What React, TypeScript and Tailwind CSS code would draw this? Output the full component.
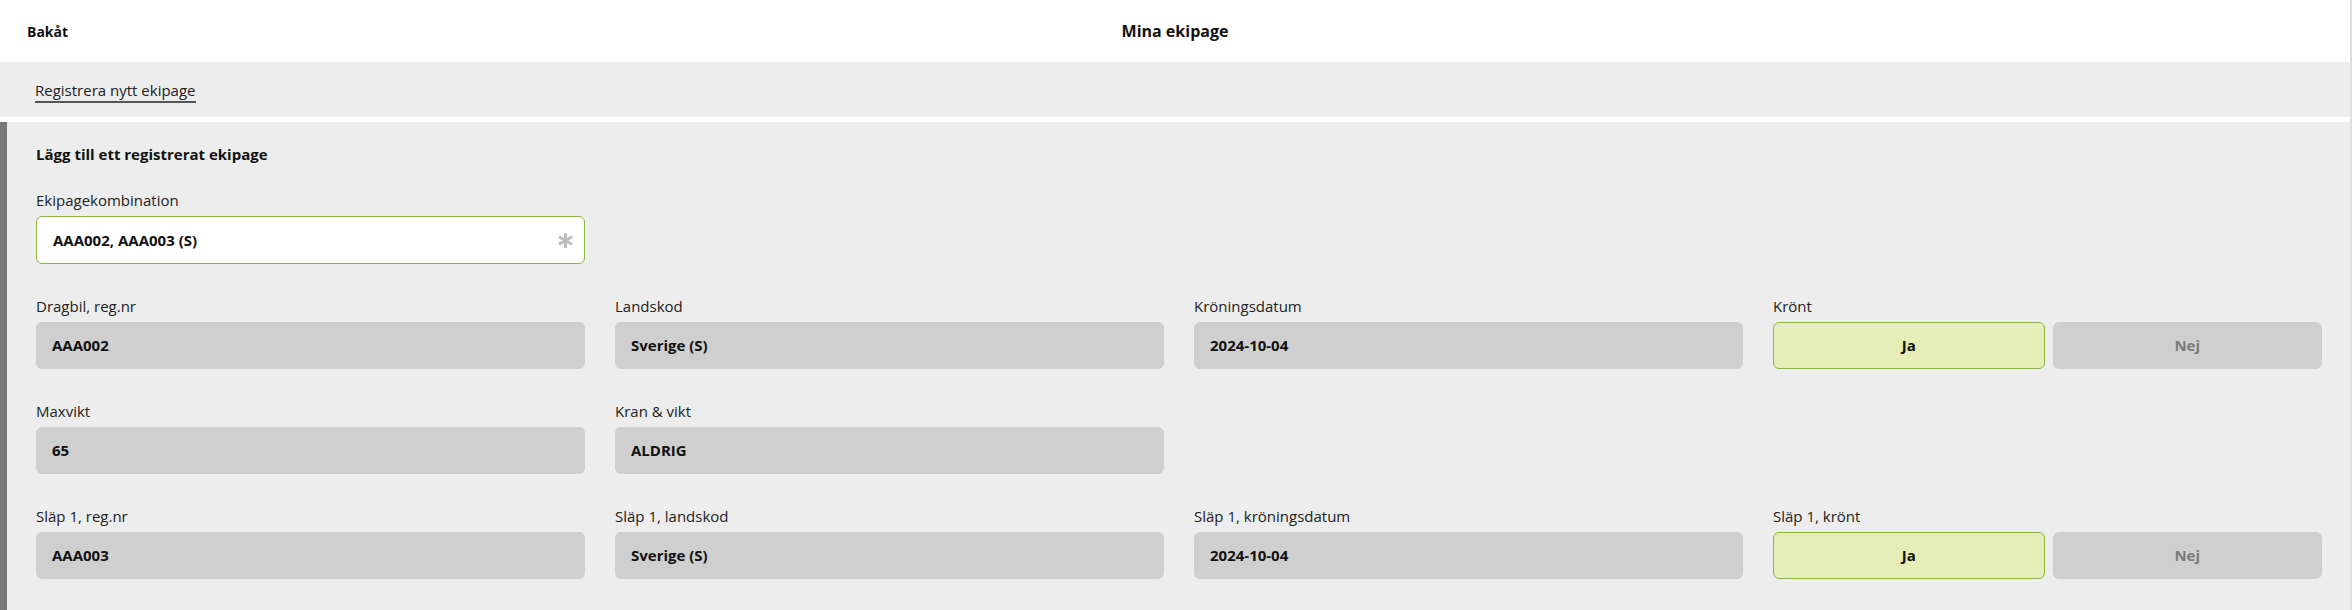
const font = { fontFamily: '"Open Sans", "Liberation Sans", sans-serif' };

type Field = { label: string; value?: string; toggle?: boolean };

const rows: Field[][] = [
  [
    { label: "Dragbil, reg.nr", value: "AAA002" },
    { label: "Landskod", value: "Sverige (S)" },
    { label: "Kröningsdatum", value: "2024-10-04" },
    { label: "Krönt", toggle: true },
  ],
  [
    { label: "Maxvikt", value: "65" },
    { label: "Kran & vikt", value: "ALDRIG" },
  ],
  [
    { label: "Släp 1, reg.nr", value: "AAA003" },
    { label: "Släp 1, landskod", value: "Sverige (S)" },
    { label: "Släp 1, kröningsdatum", value: "2024-10-04" },
    { label: "Släp 1, krönt", toggle: true },
  ],
];

const Label = ({ children }: { children: string }) => (
  <div className="text-[15px] leading-[20px] text-[#222] mb-[6px]">{children}</div>
);

const ReadOnly = ({ value }: { value: string }) => (
  <div className="h-[47px] rounded-[6px] bg-[#cfcfcf] flex items-center px-[16px] text-[15px] font-bold text-[#111]">
    {value}
  </div>
);

const YesNo = () => (
  <div className="flex gap-[8px]">
    <button className="flex-1 h-[47px] rounded-[6px] bg-[#e6eeb8] border border-[#8db543] text-[15px] font-bold text-[#111]">
      Ja
    </button>
    <button className="flex-1 h-[47px] rounded-[6px] bg-[#cfcfcf] text-[15px] font-bold text-[#7a7a7a]">
      Nej
    </button>
  </div>
);

const Asterisk = () => (
  <svg width="17" height="17" viewBox="0 0 16 16" stroke="#bcbcbc" strokeWidth="2.8">
    <line x1="8" y1="1" x2="8" y2="15" />
    <line x1="1.9" y1="4.5" x2="14.1" y2="11.5" />
    <line x1="1.9" y1="11.5" x2="14.1" y2="4.5" />
  </svg>
);

export default function App() {
  return (
    <div className="w-full min-h-[610px] bg-white border-r-2 border-[#dedede]" style={font}>
      <header className="h-[62px] bg-white grid grid-cols-3 items-center px-[27px]">
        <div className="text-[14px] font-bold text-[#111]">Bakåt</div>
        <div className="text-center text-[16px] font-bold text-[#111]">Mina ekipage</div>
        <div />
      </header>

      <div className="h-[55px] bg-[#ededed] flex items-center px-[35px]">
        <a className="text-[15px] leading-[20px] text-[#222] border-b-2 border-[#555] pb-[1px] mt-[4px]">
          Registrera nytt ekipage
        </a>
      </div>

      <section className="mt-[5px] bg-[#ededed] border-l-[7px] border-[#777] pl-[29px] pr-[28px] pt-[22px] pb-[31px]">
        <h2 className="text-[15px] leading-[20px] font-bold text-[#111] mb-[26px]">
          Lägg till ett registrerat ekipage
        </h2>

        <div className="w-[549px] mb-[32px]">
          <Label>Ekipagekombination</Label>
          <div className="h-[48px] rounded-[6px] bg-white border-[1.5px] border-[#8db543] flex items-center justify-between pl-[16px] pr-[10px]">
            <span className="text-[15px] font-bold text-[#111]">AAA002, AAA003 (S)</span>
            <Asterisk />
          </div>
        </div>

        <div className="flex flex-col gap-[32px]">
          {rows.map((row, i) => (
            <div key={i} className="grid grid-cols-4 gap-x-[30px]">
              {row.map((f) => (
                <div key={f.label}>
                  <Label>{f.label}</Label>
                  {f.toggle ? <YesNo /> : <ReadOnly value={f.value ?? ""} />}
                </div>
              ))}
            </div>
          ))}
        </div>
      </section>
    </div>
  );
}
